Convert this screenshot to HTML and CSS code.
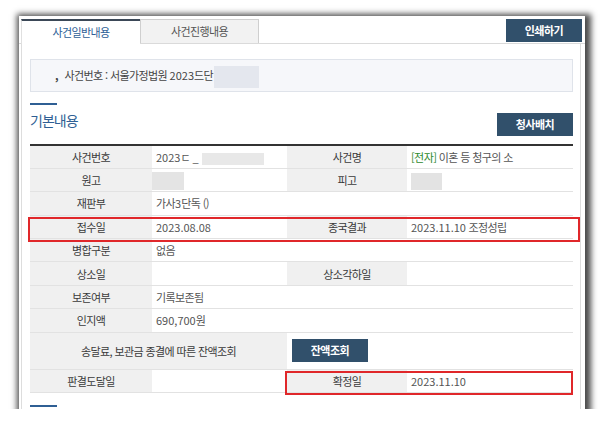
FILE: index.html
```html
<!DOCTYPE html>
<html lang="ko">
<head>
<meta charset="utf-8">
<title>사건일반내용</title>
<link rel="stylesheet" href="styles.css">
</head>
<body>
<div class="frame">
  <div class="tabbar">
    <div class="tab active">사건일반내용</div>
    <div class="tab">사건진행내용</div>
    <button class="btn btn-print">인쇄하기</button>
  </div>
  <div class="panel">
    <div class="casebox"><span class="comma">,</span> 사건번호 : 서울가정법원 <span class="num">2023</span>드단<span class="redact r-case"></span></div>
    <div class="sec-head">
      <h2 class="sec-title">기본내용</h2>
      <button class="btn btn-hall">청사배치</button>
    </div>
    <table class="info">
      <colgroup><col class="c1"><col class="c2"><col class="c3"><col class="c4"></colgroup>
      <tr><th>사건번호</th><td><span class="num">2023</span>ㄷ _<span class="redact r-no"></span></td><th>사건명</th><td><span class="tag">[전자]</span> 이혼 등 청구의 소</td></tr>
      <tr><th>원고</th><td><span class="redact r-won"></span></td><th>피고</th><td><span class="redact r-pi"></span></td></tr>
      <tr><th>재판부</th><td colspan="3">가사<span class="num">3</span>단독 ()</td></tr>
      <tr><th>접수일</th><td><span class="num">2023.08.08</span></td><th>종국결과</th><td><span class="num">2023.11.10</span> 조정성립</td></tr>
      <tr><th>병합구분</th><td colspan="3">없음</td></tr>
      <tr><th>상소일</th><td></td><th>상소각하일</th><td></td></tr>
      <tr><th>보존여부</th><td colspan="3">기록보존됨</td></tr>
      <tr><th>인지액</th><td colspan="3"><span class="num">690,700</span>원</td></tr>
      <tr class="tall"><th colspan="2">송달료, 보관금 종결에 따른 잔액조회</th><td colspan="2"><button class="btn btn-bal">잔액조회</button></td></tr>
      <tr><th>판결도달일</th><td></td><th>확정일</th><td><span class="num">2023.11.10</span></td></tr>
    </table>
    <div class="sec-line"></div>
  </div>
  <div class="mark mark-1"></div>
  <div class="mark mark-2"></div>
</div>
</body>
</html>
```
FILE: styles.css
```css
* { box-sizing: border-box; }
html, body { margin: 0; padding: 0; background: #ffffff; }
body {
  font-family: "Noto Sans CJK KR", "Noto Sans", sans-serif;
  font-size: 11px;
  letter-spacing: -0.6px;
  color: #444;
}
.num { letter-spacing: 0; }
.frame {
  position: relative;
  margin: 16px 0 0 19px;
  width: 566px;
  height: 393px;
  background: #fff;
  overflow: hidden;
  box-shadow: 2px 2px 6px 4px rgba(65,65,65,0.95);
}
.tabbar {
  display: flex;
  height: 28px;
  padding: 3px 0 0 2px;
  border-bottom: 1px solid #dadada;
}
.tab {
  width: 119px;
  height: 24px;
  line-height: 23px;
  text-align: center;
  color: #555;
  background: #f2f2f2;
  border: 1px solid #cfcfcf;
  border-bottom: none;
}
.tab.active {
  height: 25px;
  margin-bottom: -1px;
  background: #fff;
  color: #2d5e96;
  border: none;
  border-top: 2px solid #3b4857;
  border-left: 1px solid #e0e0e0;
  line-height: 22px;
}
.btn {
  font-family: inherit;
  font-size: 11px;
  font-weight: bold;
  letter-spacing: -0.5px;
  color: #fff;
  background: #31506b;
  border: none;
  padding: 0;
  width: 76px;
  height: 23px;
  line-height: 23px;
}
.btn-print { margin-left: auto; margin-right: 3px; }
.panel {
  margin: 0 4px 0 2px;
  height: 366px;
  border-left: 1px solid #dddddd;
  border-right: 1px solid #dddddd;
  padding: 15px 7px 0 8px;
}
.casebox {
  height: 33px;
  line-height: 31px;
  border: 1px solid #dfe3ea;
  background: #f6f7fa;
  padding-left: 24px;
  color: #444;
  white-space: nowrap;
}
.comma { font-weight: bold; margin-right: 4px; }
.redact { display: inline-block; vertical-align: middle; background: #e6e6e6; }
.r-case { width: 45px; height: 22px; background: #e4e7ee; margin-left: 1px; }
.r-no { width: 62px; height: 12px; margin-left: 4px; background: #e8e8e8; }
.r-won { width: 32px; height: 18px; margin-left: -4px; background: #e4e4e4; }
.r-pi { width: 31px; height: 17px; background: #e3e3e3; }
.sec-head {
  margin-top: 11px;
  height: 41px;
  display: flex;
  justify-content: space-between;
  align-items: flex-start;
}
.sec-title {
  margin: 0;
  font-size: 14px;
  font-weight: normal;
  letter-spacing: -1px;
  color: #2f5f94;
  line-height: 20px;
}
.sec-title::before {
  content: "";
  display: block;
  width: 27px;
  height: 2px;
  background: #2f5f94;
  margin-bottom: 5px;
}
.btn-hall { margin-top: 10px; }
.info {
  width: 543px;
  border-collapse: collapse;
  border-top: 2px solid #333;
  table-layout: fixed;
}
.c1 { width: 122px; }
.c2 { width: 135px; }
.c3 { width: 120px; }
.c4 { width: 166px; }
.info th, .info td {
  height: 23.4px;
  padding: 0;
  border-bottom: 1px solid #e2e2e2;
  white-space: nowrap;
  line-height: 18px;
}
.info th {
  background: #f0f0f0;
  font-weight: normal;
  color: #3a3a3a;
  text-align: center;
}
.info td {
  color: #555;
  padding-left: 4px;
}
.info tr.tall th, .info tr.tall td { height: 37px; }
.info tr.tall td { padding-left: 5px; }
.tag { color: #2e8a2e; }
.btn-bal { display: block; }
.sec-line {
  margin-top: 12px;
  width: 27px;
  height: 2px;
  background: #2f5f94;
}
.mark {
  position: absolute;
  border: 2px solid #e0272a;
}
.mark-1 { left: 9px; top: 201px; width: 552px; height: 25px; }
.mark-2 { left: 266px; top: 355px; width: 288px; height: 24px; }
```
